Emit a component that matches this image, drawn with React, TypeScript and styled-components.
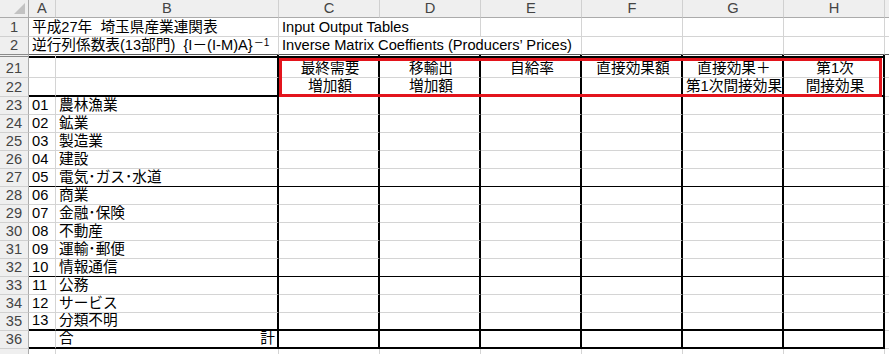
import styled, { createGlobalStyle } from "styled-components";

type Line = "grid" | "none" | "dark" | "thin" | "medium" | "thick";
type Align = "left" | "center" | "spread";

const lines: Record<Line, string> = {
  grid: "1px solid #d4d4d4",
  none: "1px solid transparent",
  dark: "1px solid #5a5a5a",
  thin: "1px solid #000",
  medium: "2px solid #000",
  thick: "3px solid #000",
};

const GlobalStyle = createGlobalStyle`
  html, body {
    margin: 0;
    padding: 0;
    background: #fff;
    overflow: hidden;
  }
`;

const Sheet = styled.div`
  position: relative;
  display: grid;
  grid-template-columns: 29px 27px 223px repeat(6, 101px) 40px;
  grid-template-rows: 18px 19px 18px 23px 19px repeat(14, 18px) 18px;
  width: 100vw;
  height: 100vh;
  overflow: hidden;
  font-family: "Liberation Sans", "Noto Sans CJK JP", sans-serif;
  font-size: 14.67px;
  color: #000;
`;

const Corner = styled.div`
  position: relative;
  background: #efefef;
  border-right: 1px solid #ababab;
  border-bottom: 1px solid #ababab;
  box-sizing: border-box;

  svg {
    position: absolute;
    right: 3px;
    bottom: 3px;
  }
`;

const ColHead = styled.div`
  display: flex;
  align-items: center;
  justify-content: center;
  background: #efefef;
  color: #444;
  border-right: 1px solid #d0d0d0;
  border-bottom: 1px solid #ababab;
  box-sizing: border-box;
  line-height: 1;
`;

const RowHead = styled.div<{ $bottom?: string; $gap?: boolean }>`
  display: flex;
  align-items: flex-end;
  justify-content: center;
  padding-bottom: 1px;
  background: #efefef;
  color: #444;
  border-right: 1px solid #ababab;
  border-bottom: 1px solid ${(p) => p.$bottom ?? "#d0d0d0"};
  box-shadow: ${(p) => (p.$gap ? "inset 0 1px 0 #efefef, inset 0 2px 0 #8a8a8a" : "none")};
  box-sizing: border-box;
  line-height: 16px;
  white-space: nowrap;
`;

const Cell = styled.div<{
  $span?: number;
  $right?: Line;
  $bottom?: Line;
  $align?: Align;
  $rule?: boolean;
}>`
  grid-column: span ${(p) => p.$span ?? 1};
  display: flex;
  align-items: flex-end;
  justify-content: ${(p) =>
    p.$align === "center" ? "center" : p.$align === "spread" ? "space-between" : "flex-start"};
  padding: 0 ${(p) => (p.$align === "spread" ? 2 : 0)}px 1px 3px;
  border-right: ${(p) => lines[p.$right ?? "grid"]};
  border-bottom: ${(p) => lines[p.$bottom ?? "grid"]};
  box-shadow: ${(p) => (p.$rule ? "inset 0 1px 0 #fff, inset 0 3px 0 #000" : "none")};
  box-sizing: border-box;
  line-height: 16px;
  white-space: nowrap;
  overflow: hidden;
`;

const Sup = styled.span`
  font-size: 10px;
  line-height: 1;
  align-self: flex-start;
  margin-top: 1px;
  margin-left: 1px;
`;

// red frame drawn over the column captions
const Highlight = styled.div`
  position: absolute;
  left: 279px;
  top: 58px;
  width: 603px;
  height: 39px;
  border: 3px solid #e3141c;
  box-sizing: border-box;
  pointer-events: none;
`;

const letters = ["A", "B", "C", "D", "E", "F", "G", "H", ""];

const captions: [string, string][] = [
  ["最終需要", "増加額"],
  ["移輸出", "増加額"],
  ["自給率", ""],
  ["直接効果額", ""],
  ["直接効果＋", "第1次間接効果"],
  ["第1次", "間接効果"],
];

const sectors = [
  "農林漁業",
  "鉱業",
  "製造業",
  "建設",
  "電気･ガス･水道",
  "商業",
  "金融･保険",
  "不動産",
  "運輸･郵便",
  "情報通信",
  "公務",
  "サービス",
  "分類不明",
];

const SelectAll = () => (
  <svg width="11" height="11" viewBox="0 0 11 11">
    <polygon points="11,0 11,11 0,11" fill="#c2c2c2" />
  </svg>
);

// rule under each sector row: groups of five, heavy line before the total
const sectorRule = (i: number): Line => {
  if (i === 4 || i === 9) return "thin";
  if (i === 12) return "medium";
  return "grid";
};

const blanks = (prefix: string, bottom: Line) =>
  captions.map((_, i) => (
    <Cell key={`${prefix}-${i}`} $right="medium" $bottom={bottom} />
  ));

export default function App() {
  return (
    <>
      <GlobalStyle />
      <Sheet>
        <Corner>
          <SelectAll />
        </Corner>
        {letters.map((l, i) => (
          <ColHead key={i}>{l}</ColHead>
        ))}

        <RowHead>1</RowHead>
        <Cell $span={2}>平成27年&nbsp;&nbsp;埼玉県産業連関表</Cell>
        <Cell $span={2}>Input Output Tables</Cell>
        <Cell />
        <Cell />
        <Cell />
        <Cell />
        <Cell />

        <RowHead $bottom="#8a8a8a">2</RowHead>
        <Cell $span={2} $bottom="dark">
          逆行列係数表(13部門)&nbsp;&nbsp;{"{I－(I-M)A}"}
          <Sup>－1</Sup>
        </Cell>
        <Cell $span={3} $bottom="dark">
          Inverse Matrix Coeffients (Producers’ Prices)
        </Cell>
        <Cell $bottom="dark" />
        <Cell $bottom="dark" />
        <Cell $bottom="dark" />
        <Cell $bottom="dark" />

        <RowHead $gap>21</RowHead>
        <Cell $rule />
        <Cell $rule $right="medium" />
        {captions.map(([top], i) => (
          <Cell key={i} $right="medium" $align="center" $rule>
            {top}
          </Cell>
        ))}
        <Cell />

        <RowHead>22</RowHead>
        <Cell $bottom="medium" />
        <Cell $bottom="medium" $right="medium" />
        {captions.map(([, bottom], i) => (
          <Cell key={i} $right="medium" $bottom="medium" $align="center">
            {bottom}
          </Cell>
        ))}
        <Cell />

        {sectors.map((name, i) => {
          const rule = sectorRule(i);
          return [
            <RowHead key={`h${i}`}>{23 + i}</RowHead>,
            <Cell key={`a${i}`} $bottom={rule}>
              {String(i + 1).padStart(2, "0")}
            </Cell>,
            <Cell key={`b${i}`} $bottom={rule} $right="medium">
              {name}
            </Cell>,
            ...blanks(`s${i}`, rule),
            <Cell key={`i${i}`} />,
          ];
        })}

        <RowHead>36</RowHead>
        <Cell $bottom="medium" />
        <Cell $bottom="medium" $right="medium" $align="spread">
          <span>合</span>
          <span>計</span>
        </Cell>
        {blanks("total", "medium")}
        <Cell />

        <RowHead />
        {letters.map((_, i) => (
          <Cell key={i} />
        ))}

        <Highlight />
      </Sheet>
    </>
  );
}
